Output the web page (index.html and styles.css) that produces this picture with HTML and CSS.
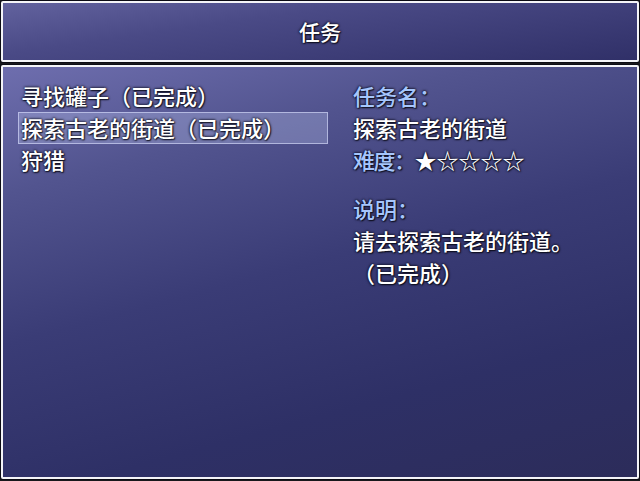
FILE: index.html
```
<!DOCTYPE html>
<html lang="zh-CN">
<head>
<meta charset="utf-8">
<title>任务</title>
<link rel="stylesheet" href="styles.css">
</head>
<body>
<div class="screen">
  <div class="window title-win">
    <h1 class="title">任务</h1>
  </div>
  <div class="window main-win">
    <ul class="quest-list">
      <li class="item">寻找罐子（已完成）</li>
      <li class="item selected">探索古老的街道（已完成）</li>
      <li class="item">狩猎</li>
    </ul>
    <div class="detail">
      <div class="line label">任务名：</div>
      <div class="line">探索古老的街道</div>
      <div class="line"><span class="label tight">难度：</span><span class="stars">★☆☆☆☆</span></div>
      <div class="line label spaced">说明：</div>
      <div class="line">请去探索古老的街道。</div>
      <div class="line">（已完成）</div>
    </div>
  </div>
</div>
</body>
</html>
```
FILE: styles.css
```
html, body {
  margin: 0;
  padding: 0;
  background: #18181c;
}
.screen {
  width: 640px;
  height: 481px;
  box-sizing: border-box;
  padding: 1px 1px 2px 1px;
  display: flex;
  flex-direction: column;
  gap: 3px;
  font-family: "Noto Sans CJK SC", "Noto Sans", sans-serif;
  font-size: 22px;
  font-weight: 500;
  color: #ffffff;
  text-shadow: 0 0 2px #10102a, 0 0 3px rgba(0,0,0,0.85), 1px 1px 1px rgba(0,0,0,0.6);
}
.window {
  box-sizing: border-box;
  border: 2px solid #f4f4f8;
  border-radius: 2px;
  box-shadow: 0 0 0 1px #0c0c14;
}
.title-win {
  height: 61px;
  display: flex;
  align-items: center;
  justify-content: center;
  padding-bottom: 2px;
  background: linear-gradient(172deg, #62629e 0%, #4a4a86 35%, #303068 100%);
}
.title {
  margin: 0;
  font-size: 21px;
  font-weight: 500;
  line-height: 32px;
}
.main-win {
  flex: 1;
  display: flex;
  gap: 25px;
  padding: 13px 0 0 15px;
  background: linear-gradient(165deg, #6e6eae 0%, #52548f 22%, #3a3c76 48%, #2e3066 75%, #2c2c5a 100%);
}
.quest-list {
  list-style: none;
  margin: 0;
  padding: 0;
  width: 310px;
}
.item {
  height: 32px;
  line-height: 31px;
  padding-left: 3px;
  box-sizing: border-box;
  white-space: nowrap;
}
.selected {
  background: rgba(195, 205, 245, 0.3);
  border: 1px solid rgba(220, 225, 255, 0.6);
  padding-left: 2px;
  line-height: 29px;
}
.detail {
  display: flex;
  flex-direction: column;
}
.line {
  height: 32px;
  line-height: 31px;
  white-space: nowrap;
}
.label {
  color: #a6c6fc;
}
.tight {
  letter-spacing: -1.5px;
}
.spaced {
  margin-top: 17px;
}
```
